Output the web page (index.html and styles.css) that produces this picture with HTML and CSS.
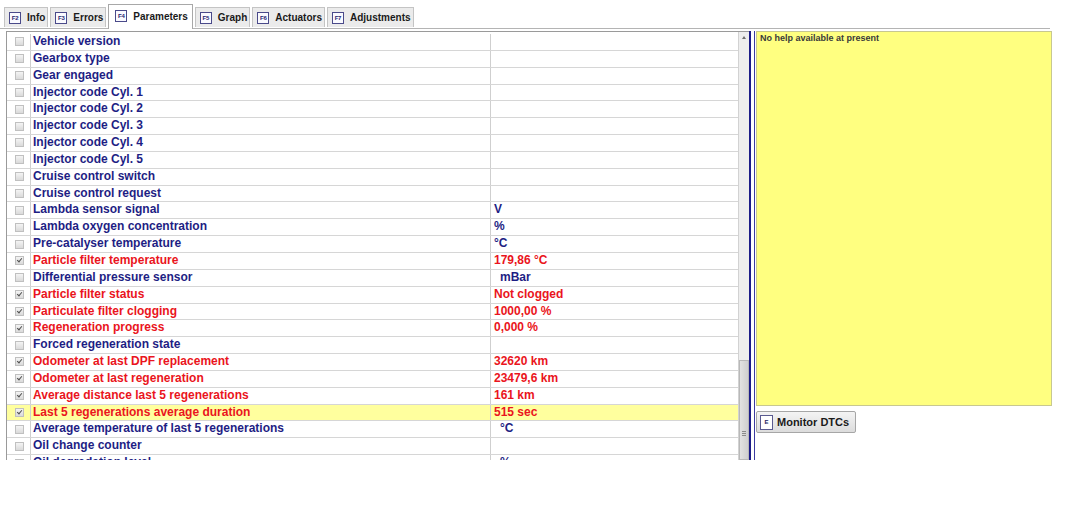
FILE: index.html
```html
<!DOCTYPE html>
<html>
<head>
<meta charset="utf-8">
<link rel="stylesheet" href="styles.css">
</head>
<body>
<div class="tabbar">
  <div class="tab"><span class="fkey">F2</span><span>Info</span></div>
  <div class="tab"><span class="fkey">F3</span><span>Errors</span></div>
  <div class="tab active"><span class="fkey">F4</span><span>Parameters</span></div>
  <div class="tab"><span class="fkey">F5</span><span>Graph</span></div>
  <div class="tab"><span class="fkey">F6</span><span>Actuators</span></div>
  <div class="tab"><span class="fkey">F7</span><span>Adjustments</span></div>
</div>
<div class="main">
  <div class="tablepane">
    <div class="rows">
      <div class="row"><div class="cb"><span class="box"></span></div><div class="name">Vehicle version</div><div class="val"></div></div>
      <div class="row"><div class="cb"><span class="box"></span></div><div class="name">Gearbox type</div><div class="val"></div></div>
      <div class="row"><div class="cb"><span class="box"></span></div><div class="name">Gear engaged</div><div class="val"></div></div>
      <div class="row"><div class="cb"><span class="box"></span></div><div class="name">Injector code Cyl. 1</div><div class="val"></div></div>
      <div class="row"><div class="cb"><span class="box"></span></div><div class="name">Injector code Cyl. 2</div><div class="val"></div></div>
      <div class="row"><div class="cb"><span class="box"></span></div><div class="name">Injector code Cyl. 3</div><div class="val"></div></div>
      <div class="row"><div class="cb"><span class="box"></span></div><div class="name">Injector code Cyl. 4</div><div class="val"></div></div>
      <div class="row"><div class="cb"><span class="box"></span></div><div class="name">Injector code Cyl. 5</div><div class="val"></div></div>
      <div class="row"><div class="cb"><span class="box"></span></div><div class="name">Cruise control switch</div><div class="val"></div></div>
      <div class="row"><div class="cb"><span class="box"></span></div><div class="name">Cruise control request</div><div class="val"></div></div>
      <div class="row"><div class="cb"><span class="box"></span></div><div class="name">Lambda sensor signal</div><div class="val">V</div></div>
      <div class="row"><div class="cb"><span class="box"></span></div><div class="name">Lambda oxygen concentration</div><div class="val">%</div></div>
      <div class="row"><div class="cb"><span class="box"></span></div><div class="name">Pre-catalyser temperature</div><div class="val">°C</div></div>
      <div class="row red"><div class="cb"><span class="box on"></span></div><div class="name">Particle filter temperature</div><div class="val">179,86 °C</div></div>
      <div class="row"><div class="cb"><span class="box"></span></div><div class="name">Differential pressure sensor</div><div class="val indent">mBar</div></div>
      <div class="row red"><div class="cb"><span class="box on"></span></div><div class="name">Particle filter status</div><div class="val">Not clogged</div></div>
      <div class="row red"><div class="cb"><span class="box on"></span></div><div class="name">Particulate filter clogging</div><div class="val">1000,00 %</div></div>
      <div class="row red"><div class="cb"><span class="box on"></span></div><div class="name">Regeneration progress</div><div class="val">0,000 %</div></div>
      <div class="row"><div class="cb"><span class="box"></span></div><div class="name">Forced regeneration state</div><div class="val"></div></div>
      <div class="row red"><div class="cb"><span class="box on"></span></div><div class="name">Odometer at last DPF replacement</div><div class="val">32620 km</div></div>
      <div class="row red"><div class="cb"><span class="box on"></span></div><div class="name">Odometer at last regeneration</div><div class="val">23479,6 km</div></div>
      <div class="row red"><div class="cb"><span class="box on"></span></div><div class="name">Average distance last 5 regenerations</div><div class="val">161 km</div></div>
      <div class="row red sel"><div class="cb"><span class="box on"></span></div><div class="name">Last 5 regenerations average duration</div><div class="val">515 sec</div></div>
      <div class="row"><div class="cb"><span class="box"></span></div><div class="name">Average temperature of last 5 regenerations</div><div class="val indent">°C</div></div>
      <div class="row"><div class="cb"><span class="box"></span></div><div class="name">Oil change counter</div><div class="val"></div></div>
      <div class="row"><div class="cb"><span class="box"></span></div><div class="name">Oil degradation level</div><div class="val indent">%</div></div>
    </div>
    <div class="scrollbar">
      <div class="arrow"></div>
      <div class="thumb"><span class="grip"></span></div>
    </div>
  </div>
  <div class="splitter"></div>
  <div class="side">
    <div class="help">No help available at present</div>
    <div class="btn"><span class="ekey">E</span><span>Monitor DTCs</span></div>
  </div>
</div>
</body>
</html>
```
FILE: styles.css
```css
html, body {
  margin: 0;
  padding: 0;
  background: #ffffff;
  font-family: "Liberation Sans", Arial, sans-serif;
}
.tabbar {
  display: flex;
  align-items: flex-end;
  gap: 2px;
  width: 1046px;
  height: 28px;
  padding-left: 4px;
  border-bottom: 1px solid #b4b4b4;
  box-sizing: content-box;
}
.tab {
  display: flex;
  align-items: center;
  gap: 6px;
  height: 20px;
  padding: 0 2px 0 4px;
  margin-bottom: 1px;
  background: #ebebeb;
  border: 1px solid #c4c4c4;
  border-bottom: none;
  box-sizing: border-box;
  font-size: 10px;
  font-weight: bold;
  color: #1a1a1a;
}
.tab.active {
  height: 25px;
  margin-bottom: -1px;
  padding: 0 4px 2px 6px;
  background: #ffffff;
  border-color: #a8a8a8;
}
.fkey {
  display: flex;
  align-items: center;
  justify-content: center;
  width: 10px;
  height: 10px;
  border: 1px solid #4a4a8a;
  background: #fafaff;
  font-size: 6px;
  font-weight: bold;
  color: #1e1e70;
  letter-spacing: -0.2px;
}
.main {
  display: flex;
  margin-top: 2px;
  padding-left: 6px;
  height: 429px;
}
.tablepane {
  display: flex;
  width: 743px;
  height: 429px;
  border-top: 1px solid #9a9a9a;
  border-left: 1px solid #9a9a9a;
  box-sizing: border-box;
  overflow: hidden;
}
.rows {
  width: 731px;
  flex: none;
  padding-top: 2px;
}
.row {
  display: flex;
  height: 16.85px;
  border-bottom: 1px solid #d6d6d6;
  box-sizing: border-box;
  font-size: 12px;
  font-weight: bold;
  color: #1e1e84;
  line-height: 15.85px;
  white-space: nowrap;
}
.row.red {
  color: #ea1420;
}
.row.sel {
  background: #ffff9e;
}
.cb {
  display: flex;
  align-items: center;
  justify-content: center;
  width: 24px;
  flex: none;
  border-right: 1px solid #cfcfcf;
  box-sizing: border-box;
  padding-left: 2px;
}
.box {
  width: 7px;
  height: 7px;
  border: 1px solid #c0c0c0;
  background: linear-gradient(#f4f4f4, #dadada);
  position: relative;
}
.box.on::after {
  content: "";
  position: absolute;
  left: 2px;
  top: 0px;
  width: 2px;
  height: 4px;
  border-right: 1px solid #505050;
  border-bottom: 1px solid #505050;
  transform: rotate(40deg);
}
.name {
  width: 460px;
  flex: none;
  padding-left: 2px;
  border-right: 1px solid #cfcfcf;
  box-sizing: border-box;
}
.val {
  flex: 1;
  padding-left: 3px;
}
.val.indent {
  padding-left: 9px;
}
.scrollbar {
  position: relative;
  width: 11px;
  flex: none;
  background: #eeeeee;
  border-left: 1px solid #d2d2d2;
  box-sizing: border-box;
}
.arrow {
  position: absolute;
  left: 3px;
  top: 4px;
  width: 0;
  height: 0;
  border-left: 2px solid transparent;
  border-right: 2px solid transparent;
  border-bottom: 3px solid #707070;
}
.thumb {
  position: absolute;
  left: 0;
  right: 0;
  top: 328px;
  height: 100px;
  background: linear-gradient(90deg, #e2e2e2, #cfcfcf);
  border: 1px solid #b8b8b8;
  box-sizing: border-box;
}
.grip {
  position: absolute;
  left: 2px;
  top: 70px;
  width: 4px;
  height: 5px;
  border-top: 1px solid #8a8a8a;
  border-bottom: 1px solid #8a8a8a;
  box-sizing: border-box;
}
.grip::after {
  content: "";
  position: absolute;
  left: 0;
  right: 0;
  top: 1px;
  border-top: 1px solid #8a8a8a;
}
.splitter {
  width: 6px;
  flex: none;
  height: 429px;
  box-sizing: border-box;
  border-left: 2px solid #1c1c88;
  border-right: 1px solid #3a3aa0;
  background: #ffffff;
}
.side {
  display: flex;
  flex-direction: column;
  align-items: flex-start;
  padding-left: 1px;
}
.help {
  width: 296px;
  height: 375px;
  background: #ffff80;
  border: 1px solid #c8c890;
  box-sizing: border-box;
  padding: 1px 3px;
  font-size: 9px;
  font-weight: bold;
  color: #3a3a3a;
}
.btn {
  display: flex;
  align-items: center;
  gap: 4px;
  margin-top: 5px;
  width: 100px;
  height: 22px;
  padding-left: 3px;
  box-sizing: border-box;
  background: linear-gradient(#f4f4f4, #dcdcdc);
  border: 1px solid #a6a6a6;
  border-radius: 2px;
  font-size: 11px;
  font-weight: bold;
  color: #1a1a1a;
}
.ekey {
  display: flex;
  align-items: center;
  justify-content: center;
  width: 13px;
  height: 15px;
  border: 1px solid #5a5a90;
  background: #ffffff;
  box-sizing: border-box;
  font-size: 6px;
  color: #1e1e60;
}
```
